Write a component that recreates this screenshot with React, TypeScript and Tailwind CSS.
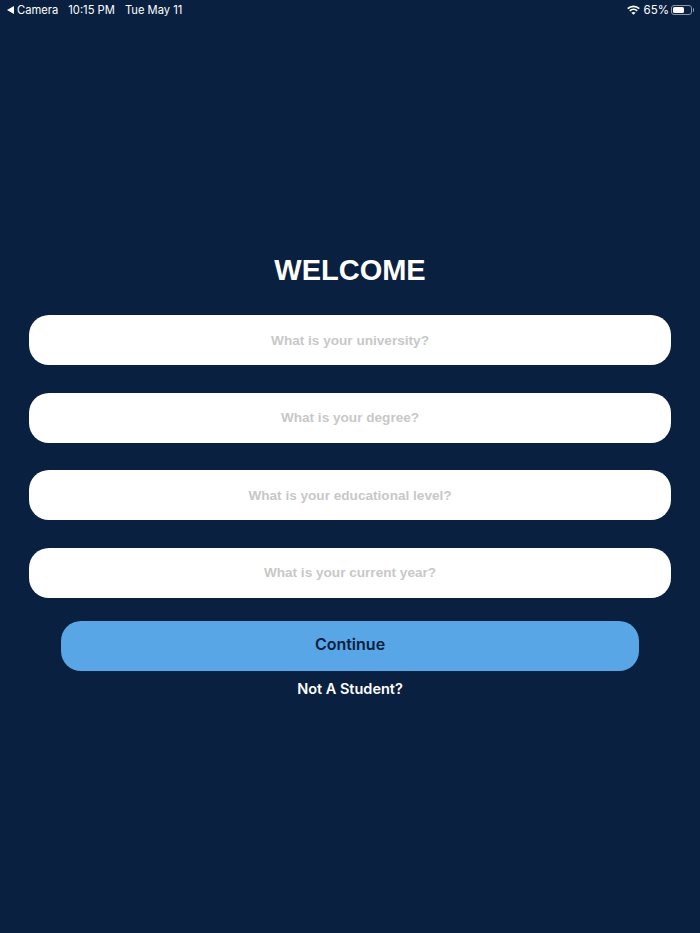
import React from 'react';

const questions = [
  'What is your university?',
  'What is your degree?',
  'What is your educational level?',
  'What is your current year?',
];

function WifiIcon() {
  return (
    <svg width="13" height="10" viewBox="0 0 13 10" fill="none" stroke="white" strokeWidth="1.7">
      <path d="M0.7 3.7C4 0.5 9 0.5 12.3 3.7" />
      <path d="M2.8 5.8C4.9 3.9 8.1 3.9 10.2 5.8" />
      <path d="M6.5 9.8L4.4 7.7C5.6 6.6 7.4 6.6 8.6 7.7Z" fill="white" stroke="none" />
    </svg>
  );
}

function BatteryIcon() {
  return (
    <div className="flex items-center">
      <div className="w-[21px] h-[10px] rounded-[3px] border border-[#8d97a8] p-[1px]">
        <div className="w-[65%] h-full rounded-[1.5px] bg-white" />
      </div>
      <div className="w-[1.5px] h-[4px] ml-[0.5px] rounded-r-sm bg-[#8d97a8]" />
    </div>
  );
}

export default function App() {
  return (
    <div className="w-[700px] h-[933px] bg-[#0a2040] font-['Liberation_Sans',sans-serif] overflow-hidden">
      {/* 状态栏 */}
      <div className="h-[20px] pl-[7px] pr-[6px] flex items-center justify-between text-white text-[11.2px] font-['Inter',sans-serif]">
        <div className="flex items-center">
          <span className="w-0 h-0 border-y-[4px] border-y-transparent border-r-[7px] border-r-white mr-[3px]" />
          <span>Camera</span>
          <span className="ml-[10px]">10:15 PM</span>
          <span className="ml-[10px]">Tue May 11</span>
        </div>
        <div className="flex items-center">
          <WifiIcon />
          <span className="ml-[4px] mr-[2px] pt-[1px] text-[11.5px]">65%</span>
          <BatteryIcon />
        </div>
      </div>

      <h1 className="mt-[232px] h-[36px] leading-[36px] text-center text-white text-[29px] font-bold">WELCOME</h1>

      {/* 表单 */}
      <div className="mt-[27.4px] mx-[29px] flex flex-col gap-[27.5px]">
        {questions.map((q) => (
          <input
            key={q}
            placeholder={q}
            className="w-full h-[50px] rounded-[20px] bg-white text-center text-[13.6px] font-bold outline-none placeholder:text-[#c8c8c8]"
          />
        ))}
      </div>

      <button className="block mt-[23.1px] mx-auto w-[578px] h-[50px] pb-[4px] rounded-[20px] bg-[#58a6e6] text-[#0a2040] text-[16px] font-semibold font-['Inter',sans-serif]">
        Continue
      </button>
      <div className="mt-[9px] text-center text-white text-[14.5px] leading-[18px] font-semibold font-['Inter',sans-serif]">
        Not A Student?
      </div>
    </div>
  );
}
